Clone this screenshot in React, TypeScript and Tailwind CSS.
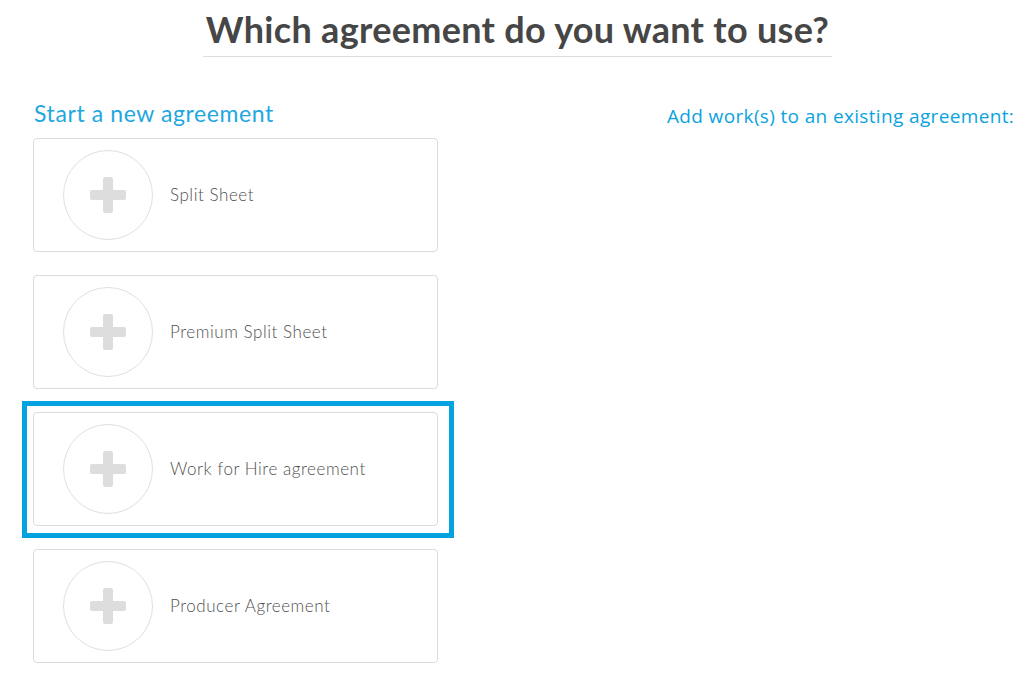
import React from "react";

const items = ["Split Sheet", "Premium Split Sheet", "Work for Hire agreement", "Producer Agreement"];

function Plus() {
  return (
    <svg width="36" height="36" viewBox="0 0 36 36">
      <rect x="13" y="0" width="10" height="36" rx="2" fill="#dddddd" />
      <rect x="0" y="13" width="36" height="10" rx="2" fill="#dddddd" />
    </svg>
  );
}

function Card({ label, highlight }: { label: string; highlight?: boolean }) {
  return (
    <div className="relative h-[114px] w-[405px] rounded-[4px] border border-[#dcdcdc] bg-white flex items-center pl-[29px]">
      {highlight && (
        <div className="absolute left-[-12px] top-[-12px] w-[432px] h-[137px] border-[5px] border-[#04a3e0] pointer-events-none" />
      )}
      <div className="w-[90px] h-[90px] rounded-full border border-[#e0e0e0] flex items-center justify-center">
        <Plus />
      </div>
      <span className="ml-[17px] text-[17px] tracking-[0.55px] font-light text-[#505050] font-['Lato',sans-serif]">{label}</span>
    </div>
  );
}

export default function App() {
  return (
    <div className="w-[1035px] h-[694px] bg-white overflow-hidden font-['Lato',sans-serif]">
      <div className="flex justify-center pt-[5px]">
        <h1 className="inline-block border-b border-[#dddddd] px-[3px] pb-[3px] text-[36px] tracking-[0.3px] leading-[48px] font-bold text-[#464646] font-['Lato',sans-serif]">
          Which agreement do you want to use?
        </h1>
      </div>
      <div className="flex pl-[33px] mt-[41px]">
        <div className="w-[405px] flex flex-col">
          <h2 className="text-[23px] tracking-[0.6px] leading-[30px] text-[#1ea7e0] pl-[1px] mb-[10px]">Start a new agreement</h2>
          <div className="flex flex-col gap-[23px]">
            {items.map((l, i) => (
              <Card key={l} label={l} highlight={i === 2} />
            ))}
          </div>
        </div>
        <div className="ml-[229px] pt-[5px]">
          <p className="text-[19px] tracking-[0.35px] leading-[26px] text-[#0aa3e0] font-['Open_Sans',sans-serif]">
            Add work(s) to an existing agreement:
          </p>
        </div>
      </div>
    </div>
  );
}
